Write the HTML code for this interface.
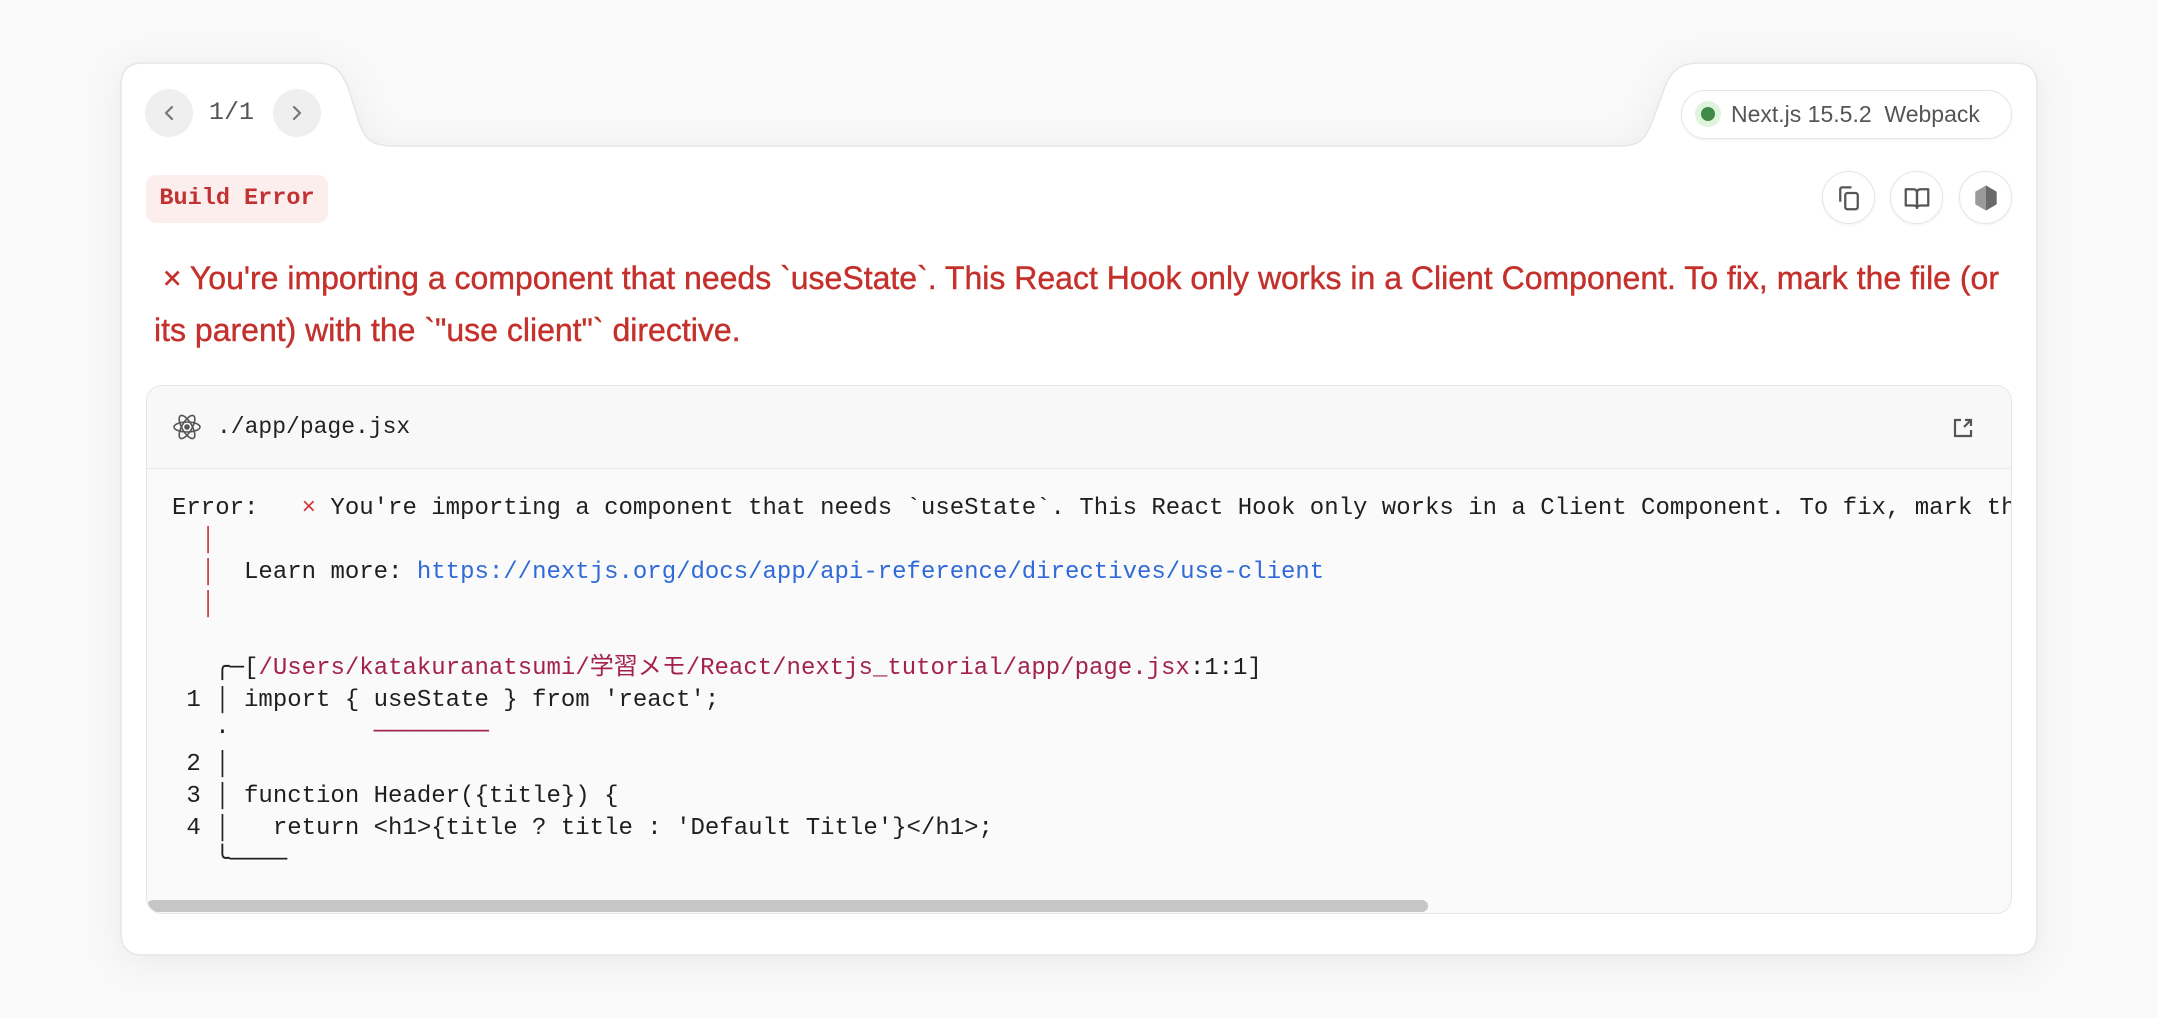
<!DOCTYPE html>
<html><head><meta charset="utf-8"><style>
html,body{margin:0;padding:0;width:2158px;height:1018px;background:#f9f9f9;overflow:hidden;font-family:"Liberation Sans","Noto Sans CJK JP",sans-serif;}
.abs{position:absolute}
.mono{font-family:"Liberation Mono","DejaVu Sans Mono","Noto Sans CJK JP",monospace}
.nav{width:48px;height:48px;border-radius:50%;background:#efefef;top:89px}
.icb{width:53px;height:53px;border-radius:50%;background:#fff;border:1.5px solid #e6e6e6;top:171px;box-shadow:0 1px 3px rgba(0,0,0,.06);display:flex;align-items:center;justify-content:center;box-sizing:border-box}
pre{margin:0;font-size:24px;line-height:32px;color:#1f1f1f}
.r{color:#d2343a}.m{color:#a3214f}.b{color:#2f6ad6}
</style></head><body>
<svg class="abs" style="left:0;top:0;filter:drop-shadow(0 6px 18px rgba(0,0,0,.06))" width="2158" height="1018">
<path d="M121 85 Q121 63 143 63 L318 63 C340 63 346 80 352 100 L360 125 C366 140 372 146 395 146 L1620 146 C1640 146 1646 138 1652 122 L1662 95 C1668 75 1676 63 1700 63 L2015 63 Q2037 63 2037 85 L2037 933 Q2037 955 2015 955 L143 955 Q121 955 121 933 Z" fill="#fff" stroke="#e6e6e6" stroke-width="1.5"/>
</svg>
<div class="abs nav" style="left:145px"><svg width="48" height="48"><path d="M27 18 L21 24 L27 30" fill="none" stroke="#777" stroke-width="2.2" stroke-linecap="round" stroke-linejoin="round"/></svg></div>
<div class="abs mono" style="left:209px;top:96px;font-size:25px;color:#555;line-height:34px">1/1</div>
<div class="abs nav" style="left:273px"><svg width="48" height="48"><path d="M21 18 L27 24 L21 30" fill="none" stroke="#777" stroke-width="2.2" stroke-linecap="round" stroke-linejoin="round"/></svg></div>

<div class="abs" style="left:1681px;top:90px;width:331px;height:49px;border:1.5px solid #e6e6e6;border-radius:25px;box-sizing:border-box;background:#fff;box-shadow:0 1px 3px rgba(0,0,0,.05)">
<div class="abs" style="left:13px;top:10px;width:26px;height:26px;border-radius:50%;background:#dff3dd"></div>
<div class="abs" style="left:19px;top:16px;width:14px;height:14px;border-radius:50%;background:#3f8a47"></div>
<div class="abs" style="left:49px;top:9px;font-size:23px;color:#555;white-space:nowrap;line-height:28px">Next.js 15.5.2&nbsp; Webpack</div>
</div>

<div class="abs mono" style="left:146px;top:175px;width:182px;height:48px;border-radius:10px;background:#fdeeee;color:#c33232;font-size:23.5px;line-height:48px;text-align:center;font-weight:bold">Build Error</div>

<div class="abs icb" style="left:1822px"><svg width="30" height="30" viewBox="0 0 24 24" fill="none" stroke="#555" stroke-width="1.8" stroke-linejoin="round"><path d="M5 15 V5 Q5 3.5 6.5 3.5 H14"/><rect x="9" y="8" width="10" height="13" rx="1.8"/></svg></div>
<div class="abs icb" style="left:1890px"><svg width="30" height="30" viewBox="0 0 24 24" fill="none" stroke="#555" stroke-width="1.8" stroke-linejoin="round"><path d="M3 5 H9 Q12 5 12 8 V20 Q12 18 9 18 H3 Z"/><path d="M21 5 H15 Q12 5 12 8 V20 Q12 18 15 18 H21 Z"/></svg></div>
<div class="abs icb" style="left:1959px"><svg width="30" height="30" viewBox="0 0 24 24"><path d="M12 2 L20.5 7 V17 L12 22 L3.5 17 V7 Z" fill="#888"/><path d="M12 2 L20.5 7 V17 L12 22 Z" fill="#6a6a6a"/><path d="M3.5 7 L12 2 L12 22 L3.5 17 Z" fill="#9a9a9a"/></svg></div>

<div class="abs" style="left:154px;top:252px;font-size:32px;line-height:52px;color:#c4302b;white-space:nowrap;-webkit-text-stroke:0.4px #c4302b">&nbsp;× You're importing a component that needs `useState`. This React Hook only works in a Client Component. To fix, mark the file (or<br>its parent) with the `"use client"` directive.</div>

<div class="abs" style="left:146px;top:385px;width:1866px;height:529px;border:1.5px solid #e6e6e6;border-radius:16px;box-sizing:border-box;overflow:hidden;background:#fafafa">
<div class="abs" style="left:0;top:0;width:100%;height:82px;background:#f8f8f8;border-bottom:1.5px solid #e8e8e8"></div>
<svg class="abs" style="left:24px;top:25px" width="32" height="32" viewBox="0 0 32 32" fill="none" stroke="#555" stroke-width="1.6"><ellipse cx="16" cy="16" rx="13" ry="5"/><ellipse cx="16" cy="16" rx="13" ry="5" transform="rotate(60 16 16)"/><ellipse cx="16" cy="16" rx="13" ry="5" transform="rotate(-60 16 16)"/><circle cx="16" cy="16" r="2" fill="#555"/></svg>
<div class="abs mono" style="left:70px;top:26px;font-size:23px;color:#222;line-height:30px">./app/page.jsx</div>
<svg class="abs" style="left:1804px;top:30px" width="24" height="24" viewBox="0 0 24 24" fill="none" stroke="#555" stroke-width="2.2"><path d="M10 4 H4 V20 H20 V14"/><path d="M13 11 L20 4 M14 4 H20 V10"/></svg>
<pre class="abs mono" style="left:25px;top:107px">Error:   <span class="r">×</span> You're importing a component that needs `useState`. This React Hook only works in a Client Component. To fix, mark the file (or its parent) with the `"use client"` directive.
  <span class="r">│</span>
  <span class="r">│</span>  Learn more: <span class="b">https://nextjs.org/docs/app/api-reference/directives/use-client</span>
  <span class="r">│</span>

   ╭─[<span class="m">/Users/katakuranatsumi/学習メモ/React/nextjs_tutorial/app/page.jsx</span>:1:1]
 1 │ import { useState } from 'react';
   ·          <span class="m">────────</span>
 2 │
 3 │ function Header({title}) {
 4 │   return &lt;h1&gt;{title ? title : 'Default Title'}&lt;/h1&gt;;
   ╰────</pre>
<div class="abs" style="left:0;top:513px;width:100%;height:14px;background:#fafafa"></div>
<div class="abs" style="left:0;top:514px;width:1281px;height:12px;border-radius:6px;background:#c6c6c6"></div>
</div>
</body></html>
